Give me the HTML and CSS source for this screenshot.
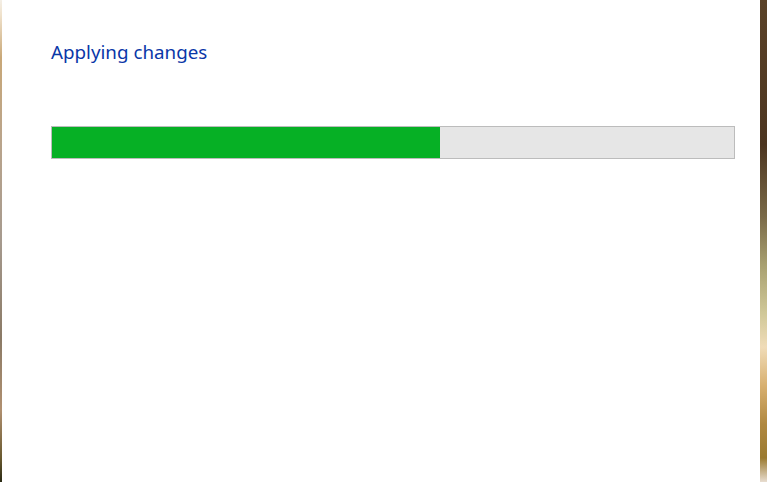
FILE: index.html
```html
<!DOCTYPE html>
<html>
<head>
  <meta charset="UTF-8" />
  <title>Applying changes</title>
  <link rel="stylesheet" href="styles.css">
</head>
<body>

<div class="desk left"></div>

<div class="panel">
  <h2 class="title">Applying changes</h2>
  <div class="progress">
    <div class="fill" style="width: 56.9%;"></div>
  </div>
</div>

<div class="desk right"></div>

</body>
</html>
```

FILE: styles.css
```css
html, body { height: 100%; }
body {
  margin: 0;
  display: flex;
  background: #fff;
  font-family: "Noto Sans", "Open Sans", sans-serif;
}
.desk { flex: none; }
.desk.left {
  width: 2px;
  background: linear-gradient(#f4efe6 0%, #f0e2cc 3%, #c9a878 12%, #b9a48c 30%, #a69a8e 50%, #8a7a66 70%, #b09070 85%, #6a5a30 95%, #2a2a14 100%);
}
.desk.right {
  width: 7px;
  background: linear-gradient(#5a4228 0%, #4c3520 30%, #7a6a48 45%, #a8a070 55%, #d0c898 65%, #f0dcb8 72%, #d8b070 80%, #b08840 88%, #9a7a30 95%, #e8ddd0 100%);
}
.panel {
  flex: 1;
  padding: 0 25px 0 49px;
}
.title {
  margin: 39px 0 0;
  font-size: 18.8px;
  font-weight: normal;
  color: #0a37a8;
}
.progress {
  margin-top: 61px;
  height: 31px;
  border: 1px solid #bcbcbc;
  background: #e6e6e6;
}
.progress .fill {
  height: 100%;
  background: #06b025;
}
```
